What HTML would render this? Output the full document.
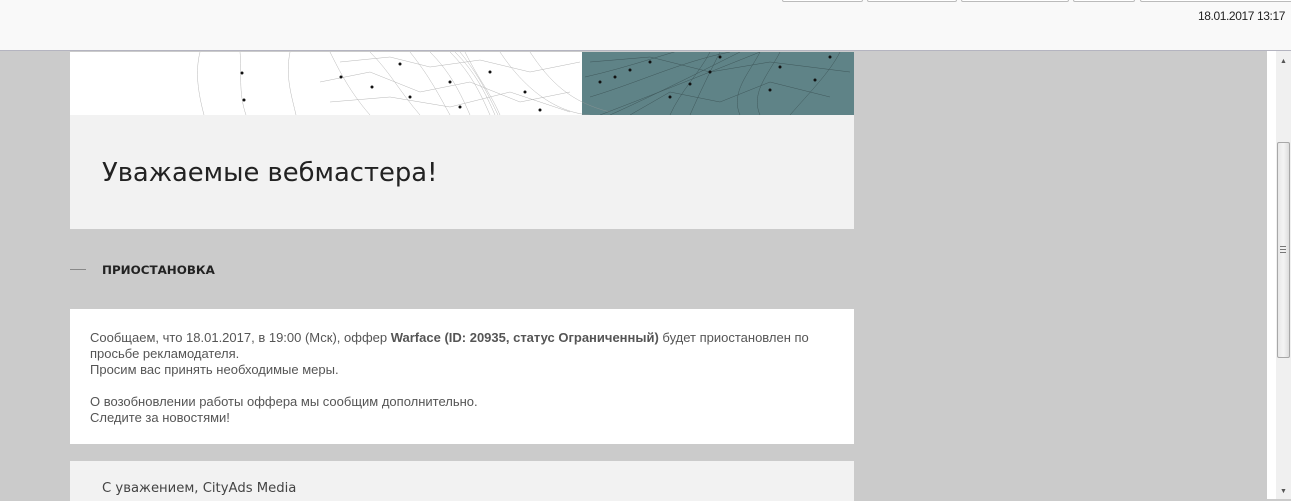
<!DOCTYPE html>
<html><head><meta charset="utf-8"><style>
*{margin:0;padding:0;box-sizing:border-box}
body{width:1291px;height:499px;overflow:hidden;background:#cbcbcb;font-family:"Liberation Sans",Arial,sans-serif;position:relative}
.top{position:absolute;left:0;top:0;width:1291px;height:51px;background:#f9f9f9;border-bottom:1px solid #b4b4c0}
.btn{position:absolute;top:-3px;height:5px;border:1px solid #bbb;border-radius:2px;background:#fff}
.date{position:absolute;right:6px;top:9px;font-size:12px;color:#222;letter-spacing:-0.4px}
.sb{position:absolute;left:1267px;top:51px;width:9px;height:448px;background:#fff}
.tr{position:absolute;left:1276px;top:51px;width:15px;height:448px;background:#f0f0f0}
.th{position:absolute;left:1277px;top:142px;width:13px;height:216px;background:linear-gradient(90deg,#e8e8e8,#f4f4f4 50%,#ddd);border:1px solid #a8a8a8;border-radius:2px}
.g{font-family:"DejaVu Sans","Liberation Sans",sans-serif}
</style></head><body>
<div class="top">
<div class="btn" style="left:782px;width:81px"></div>
<div class="btn" style="left:867px;width:90px"></div>
<div class="btn" style="left:961px;width:108px"></div>
<div class="btn" style="left:1073px;width:62px"></div>
<div class="btn" style="left:1140px;width:155px"></div>
<div class="date">18.01.2017 13:17</div>
</div>
<svg style="position:absolute;left:70px;top:52px" width="784" height="63">
<rect width="784" height="63" fill="#fff"/>
<rect x="512" width="272" height="63" fill="#5f8387"/>
<g fill="none" stroke="#999" stroke-width="0.5" opacity="0.7">
<path d="M130 0 C125 20 128 40 134 63"/><path d="M170 0 C172 20 168 40 176 63"/><path d="M220 0 C215 25 222 45 226 63"/>
<path d="M260 0 C270 20 280 40 300 63"/><path d="M300 0 C320 20 330 40 350 63"/><path d="M340 0 C360 25 370 45 380 63"/>
<path d="M360 0 C380 20 390 40 400 63"/><path d="M380 0 C400 20 410 40 420 63"/><path d="M395 0 C410 30 420 40 430 63"/>
<path d="M385 0 C405 20 415 40 425 63"/><path d="M390 0 C408 22 418 42 428 63"/>
<path d="M430 0 C450 30 480 60 520 63"/><path d="M460 0 C480 30 500 50 540 60"/>
<path d="M250 30 L300 20 L350 40 L400 30 L450 50 L500 40"/><path d="M260 50 L320 45 L380 55 L440 40 L500 60"/>
<path d="M270 10 L320 5 L360 15 L410 8 L460 20 L510 10"/>
</g>
<g fill="none" stroke="#2a3a3c" stroke-width="0.5" opacity="0.6">
<path d="M515 25 C560 15 600 0 640 -10"/><path d="M520 45 C570 30 610 10 660 0"/><path d="M530 63 C590 40 640 20 690 0"/>
<path d="M690 63 C680 40 700 20 710 0"/><path d="M670 63 C660 40 680 20 690 0"/><path d="M620 63 C630 40 640 20 650 0"/>
<path d="M720 63 C740 40 760 20 770 0"/><path d="M560 63 L600 40 L650 50 L700 30 L760 45"/><path d="M520 10 L580 5 L640 20 L700 10 L780 20"/>
<path d="M540 63 C580 45 620 25 670 0"/><path d="M600 63 C610 40 630 20 640 0"/>
</g>
<g fill="#111">
<circle cx="172" cy="21" r="1.5"/><circle cx="174" cy="48" r="1.5"/><circle cx="271" cy="25" r="1.5"/><circle cx="302" cy="35" r="1.5"/>
<circle cx="330" cy="12" r="1.5"/><circle cx="340" cy="45" r="1.5"/><circle cx="380" cy="30" r="1.5"/><circle cx="390" cy="55" r="1.5"/>
<circle cx="420" cy="20" r="1.5"/><circle cx="455" cy="40" r="1.5"/><circle cx="470" cy="58" r="1.5"/>
<circle cx="530" cy="30" r="1.5"/><circle cx="545" cy="25" r="1.5"/><circle cx="560" cy="18" r="1.5"/><circle cx="580" cy="10" r="1.5"/>
<circle cx="600" cy="45" r="1.5"/><circle cx="620" cy="32" r="1.5"/><circle cx="640" cy="20" r="1.5"/><circle cx="650" cy="5" r="1.5"/>
<circle cx="700" cy="38" r="1.5"/><circle cx="710" cy="15" r="1.5"/><circle cx="745" cy="28" r="1.5"/><circle cx="760" cy="5" r="1.5"/>
</g>
</svg>
<div style="position:absolute;left:70px;top:115px;width:784px;height:114px;background:#f2f2f2"></div>
<div class="g" style="position:absolute;left:102px;top:158px;font-size:25.8px;color:#222">Уважаемые вебмастера!</div>
<div style="position:absolute;left:70px;top:269px;width:16px;height:1px;background:#888"></div>
<div class="g" style="position:absolute;left:102px;top:263px;font-size:11.9px;font-weight:bold;color:#222">ПРИОСТАНОВКА</div>
<div style="position:absolute;left:70px;top:309px;width:784px;height:135px;background:#fff;padding:21px 20px;font-size:13px;line-height:16px;color:#555">
Сообщаем, что 18.01.2017, в 19:00 (Мск), оффер <b>Warface (ID: 20935, статус Ограниченный)</b> будет приостановлен по<br>просьбе рекламодателя.<br>Просим вас принять необходимые меры.<br><br>О возобновлении работы оффера мы сообщим дополнительно.<br>Следите за новостями!
</div>
<div style="position:absolute;left:70px;top:461px;width:784px;height:40px;background:#f2f2f2"></div>
<div class="g" style="position:absolute;left:102px;top:481px;font-size:13.2px;color:#444">С уважением, CityAds Media</div>
<div class="sb"></div><div class="tr"></div><div class="th"></div>
<div style="position:absolute;left:1280px;top:58px;font-size:7px;color:#555">▲</div>
<div style="position:absolute;left:1280px;top:488px;font-size:7px;color:#555">▼</div>
<div style="position:absolute;left:1280px;top:246px;width:6px;height:7px;border-top:1px solid #777;border-bottom:1px solid #777"><div style="margin-top:2px;height:1px;background:#777"></div></div>
</body></html>
